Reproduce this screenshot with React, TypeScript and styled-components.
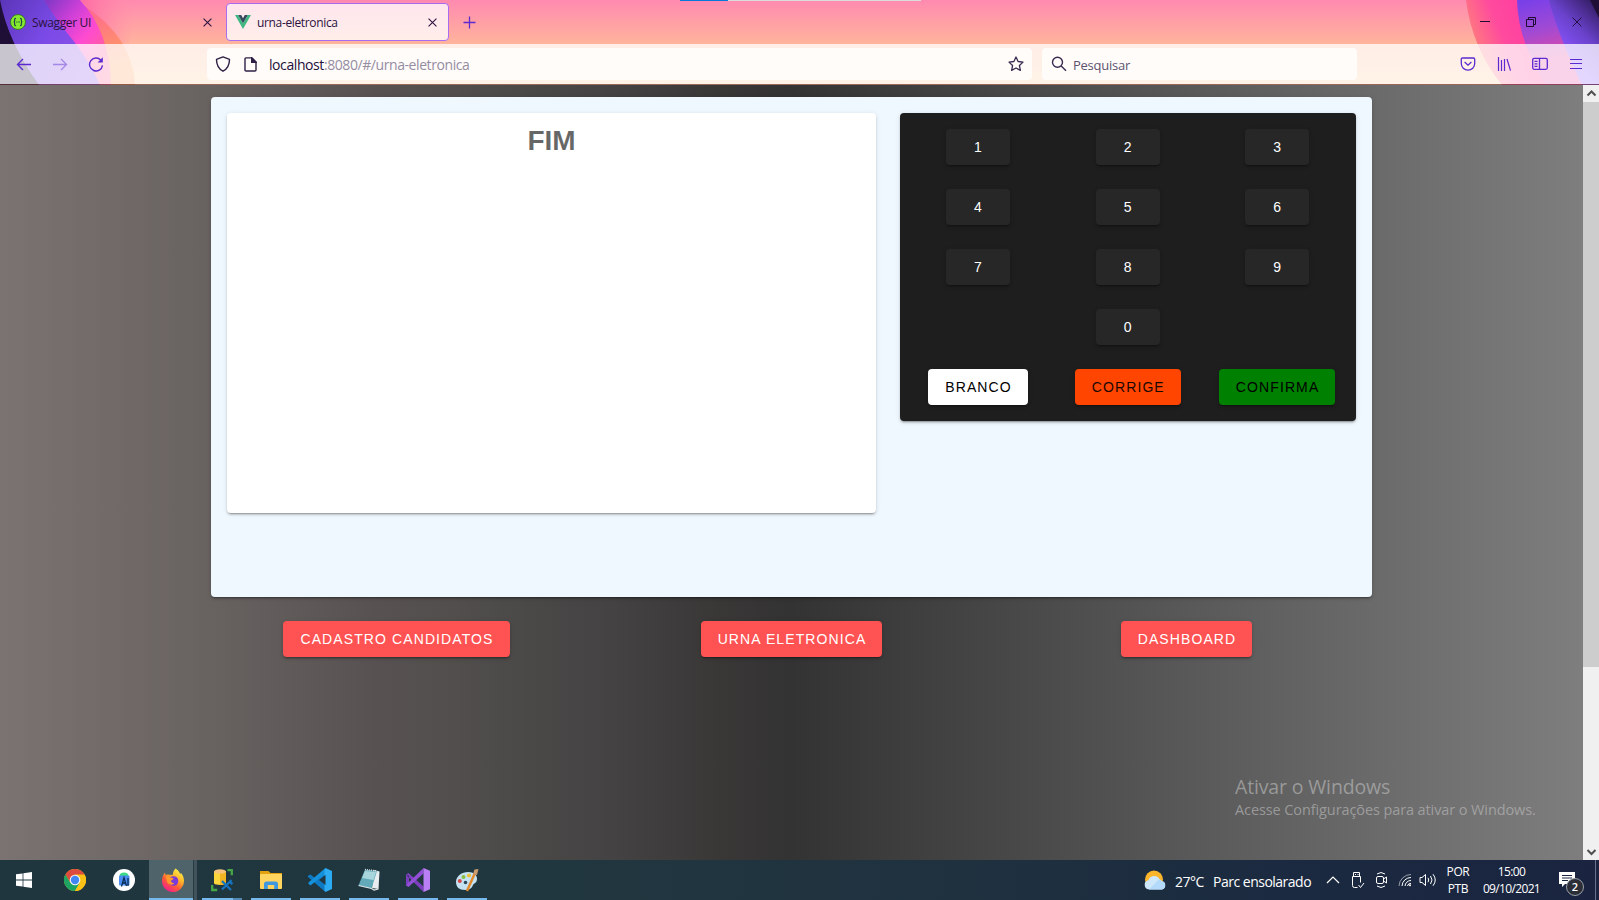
import React from 'react';
import styled, { createGlobalStyle } from 'styled-components';

const ui = '"Open Sans", "Noto Sans", sans-serif';
const sans = '"Liberation Sans", Arial, sans-serif';

const Global = createGlobalStyle`
  * { box-sizing: border-box; }
  body { margin: 0; overflow: hidden; }
  svg { display: block; flex: none; }
  button { border: 0; padding: 0; background: none; }
`;

const Desktop = styled.div`
  width: 1599px;
  height: 900px;
  display: flex;
  flex-direction: column;
  overflow: hidden;
`;

/* ---------- browser chrome ---------- */

const Chrome = styled.header`
  position: relative;
  isolation: isolate;
  height: 85px;
  flex: none;
  background: linear-gradient(#ff8ab0 0, #ffb49c 44px, #ffcf9a 85px);
`;

const ThemeLayer = styled.svg`
  position: absolute;
  inset: 0;
  z-index: -1;
`;

const LoadBar = styled.div`
  position: absolute;
  top: 0;
  left: 680px;
  width: 241px;
  height: 1px;
  background: linear-gradient(90deg, #0a78d7 48px, #dcdcdc 48px);
`;

const TabStrip = styled.div`
  height: 44px;
  display: flex;
  align-items: center;
`;

const Tab = styled.div<{ $active?: boolean }>`
  width: ${p => (p.$active ? 223 : 226)}px;
  height: 38px;
  display: flex;
  align-items: center;
  padding: ${p => (p.$active ? '0 11px 0 8px' : '0 14px 0 10px')};
  border-radius: 4px;
  border: ${p => (p.$active ? '1px solid #a86cf0' : '0')};
  background: ${p => (p.$active ? 'rgba(255,255,255,.78)' : 'none')};
`;

const TabTitle = styled.span<{ $spacing: number; $gap: number }>`
  flex: 1;
  margin-left: ${p => p.$gap}px;
  padding-top: 2px;
  font: 12px/16px ${ui};
  letter-spacing: ${p => p.$spacing}px;
  color: #2b1240;
  white-space: nowrap;
`;

const NewTab = styled.button`
  margin-left: 14px;
`;

const WindowButtons = styled.div`
  margin-left: auto;
  display: flex;
  gap: 36px;
  padding-right: 17px;
`;

const Toolbar = styled.div`
  height: 41px;
  display: flex;
  align-items: center;
  background: rgba(255, 255, 255, 0.76);
  border-bottom: 1px solid rgba(110, 60, 60, 0.7);
  background-clip: padding-box;
`;

const NavButtons = styled.div`
  width: 207px;
  display: flex;
  gap: 20px;
  padding-left: 16px;
`;

const Field = styled.div<{ $width: number }>`
  width: ${p => p.$width}px;
  height: 32px;
  display: flex;
  align-items: center;
  border-radius: 4px;
  background: #fffcfa;
  color: #5d5370;
  white-space: nowrap;
`;

const UrlField = styled(Field)`
  padding: 0 8px;
`;

const SearchField = styled(Field)`
  margin-left: 10px;
  padding-left: 9px;
`;

const Url = styled.span`
  flex: 1;
  margin-left: 12px;
  padding-top: 2px;
  font: 14px/20px ${ui};
  letter-spacing: -0.42px;
  color: #958da2;
`;

const Host = styled.span`
  color: #24103a;
`;

const SearchHint = styled.span`
  margin-left: 6px;
  padding-top: 2px;
  font: 13px/20px ${ui};
  letter-spacing: -0.25px;
`;

const DocIcon = styled.svg`
  margin-left: 13px;
`;

const ToolIcons = styled.div`
  margin-left: auto;
  display: flex;
  align-items: center;
  gap: 20px;
  padding-right: 15px;
`;

/* ---------- page ---------- */

const Viewport = styled.div`
  position: relative;
  height: 775px;
  flex: none;
  display: flex;
`;

const Page = styled.main`
  width: 1583px;
  padding: 12px 199px 0;
  background: linear-gradient(
    90deg,
    #7a7371 0%,
    #686261 13%,
    #575251 24%,
    #4e4c4a 31%,
    #454343 38%,
    #393636 46%,
    #333 50%,
    #7e7e7e 100%
  );
`;

const shadow =
  '0 3px 1px -2px rgba(0,0,0,.2), 0 2px 2px 0 rgba(0,0,0,.14), 0 1px 5px 0 rgba(0,0,0,.12)';

const Urna = styled.section`
  height: 500px;
  margin: 0 12px;
  padding: 16px;
  display: flex;
  align-items: flex-start;
  gap: 24px;
  border-radius: 4px;
  background: aliceblue;
  box-shadow: ${shadow};
`;

const Screen = styled.div`
  width: 649px;
  height: 400px;
  padding-top: 11px;
  border-radius: 4px;
  background: #fff;
  box-shadow: ${shadow};
  text-align: center;
`;

const ScreenTitle = styled.h1`
  margin: 0;
  font: bold 28px/34px ${sans};
  color: rgba(0, 0, 0, 0.6);
`;

const Keypad = styled.div`
  width: 456px;
  height: 308px;
  padding: 16px 4px;
  display: grid;
  grid-template-columns: 148px 151.6px 147px;
  grid-auto-rows: 36px;
  row-gap: 24px;
  justify-items: center;
  border-radius: 4px;
  background: #1e1e1e;
  box-shadow: ${shadow};
`;

const Button = styled.button<{ $bg?: string; $fg?: string; $column?: number }>`
  grid-column: ${p => p.$column ?? 'auto'};
  height: 36px;
  min-width: 64px;
  padding: 0 16px 0 17px;
  border-radius: 4px;
  background: ${p => p.$bg ?? '#272727'};
  color: ${p => p.$fg ?? '#fff'};
  font: 14px/36px ${sans};
  letter-spacing: 1.1px;
  white-space: nowrap;
  box-shadow: ${shadow};
`;

const Links = styled.nav`
  margin-top: 24px;
  display: grid;
  grid-template-columns: repeat(3, 1fr);
  justify-items: center;
`;

const Scrollbar = styled.div`
  width: 16px;
  display: flex;
  flex-direction: column;
  justify-content: space-between;
  background: #f0f0f0;
`;

const Thumb = styled.div`
  height: 565px;
  margin-bottom: auto;
  background: #cdcdcd;
`;

const Watermark = styled.div`
  position: absolute;
  left: 1235px;
  top: 690px;
  color: rgba(190, 190, 190, 0.62);
  white-space: nowrap;
`;

const WatermarkTitle = styled.div`
  font: 19.5px/24px ${ui};
  letter-spacing: -0.15px;
`;

const WatermarkText = styled.div`
  font: 14.5px/21px ${ui};
  letter-spacing: -0.1px;
`;

/* ---------- taskbar ---------- */

const Taskbar = styled.footer`
  height: 40px;
  flex: none;
  display: flex;
  background: linear-gradient(90deg, #20363f 0%, #21373f 35%, #1f313f 60%, #1b2a40 80%, #1a2440 100%);
`;

const StartButton = styled.div`
  width: 51px;
  display: flex;
  align-items: center;
  padding-left: 16px;
`;

const TaskItem = styled.div<{ $state?: 'open' | 'multi' | 'active' }>`
  width: 49px;
  display: flex;
  align-items: center;
  justify-content: center;
  padding-right: ${p => (p.$state === 'active' ? 2 : 1)}px;
  background: ${p => {
    if (p.$state === 'active')
      return `linear-gradient(#76b9ed, #76b9ed) 0 100% / 44px 2px no-repeat,
        linear-gradient(90deg, #4f636b 44px, #263a43 44px, #263a43 45px, #42525b 45px, #42525b 48px, transparent 48px)`;
    if (p.$state === 'multi')
      return `linear-gradient(90deg, #76b9ed 31px, #5388b2 31px) 4px 100% / 40px 2px no-repeat`;
    if (p.$state === 'open')
      return `linear-gradient(#76b9ed, #76b9ed) 4px 100% / 40px 2px no-repeat`;
    return 'none';
  }};
`;

const Tray = styled.div`
  margin-left: auto;
  display: flex;
  align-items: center;
  color: #fff;
  font: 12px/17px ${ui};
`;

const Weather = styled.div`
  width: 185px;
  display: flex;
  align-items: center;
  padding-left: 3px;
  white-space: nowrap;
  font-size: 14px;
`;

const Degrees = styled.span`
  width: 38px;
  margin-left: 9px;
  padding-top: 2px;
  letter-spacing: -0.5px;
`;

const Condition = styled.span`
  padding-top: 2px;
  letter-spacing: -0.5px;
`;

const TrayIcons = styled.div`
  width: 112px;
  display: flex;
  align-items: center;
`;

const UsbIcon = styled.svg`
  margin-left: 10px;
`;

const CameraIcon = styled.svg`
  margin-left: 10px;
`;

const WifiIcon = styled.svg`
  margin-left: 10px;
`;

const SpeakerIcon = styled.svg`
  margin-left: 7px;
`;

const TwoLine = styled.div<{ $width: number; $spacing: number }>`
  width: ${p => p.$width}px;
  height: 34px;
  display: flex;
  flex-direction: column;
  align-items: center;
  white-space: nowrap;
  font-size: 12px;
  letter-spacing: ${p => p.$spacing}px;
`;

const Notifications = styled.div`
  position: relative;
  width: 50px;
  height: 40px;
  padding: 12px 0 0 14px;
`;

const Badge = styled.span`
  position: absolute;
  left: 21px;
  top: 18px;
  width: 18px;
  height: 18px;
  border-radius: 50%;
  border: 1px solid #9aa0a8;
  background: #2b2e36;
  font: 600 11px/15px ${ui};
  text-align: center;
`;

const ShowDesktop = styled.div`
  width: 4px;
  height: 40px;
  border-left: 1px solid #69728a;
`;

const CloseX = ({ size = 9, color = '#2b1240', w = 1.2 }) => (
  <svg width={size} height={size} viewBox="0 0 10 10" stroke={color} strokeWidth={w}>
    <path d="M.6.6l8.8 8.8M9.4.6L.6 9.4" />
  </svg>
);

const Theme = () => (
  <ThemeLayer width="1599" height="85" viewBox="0 0 1599 85">
    <defs>
      <linearGradient id="lp" x1="0" y1="0" x2="1" y2="0.6">
        <stop offset="0" stopColor="#5a35b8" />
        <stop offset=".5" stopColor="#7a4ae6" />
        <stop offset="1" stopColor="#8f50e8" />
      </linearGradient>
      <linearGradient id="lm" x1="50" y1="0" x2="110" y2="50" gradientUnits="userSpaceOnUse">
        <stop offset="0" stopColor="#8838c8" />
        <stop offset=".35" stopColor="#d040d8" />
        <stop offset=".65" stopColor="#ff4bd0" />
        <stop offset="1" stopColor="#ff5f96" />
      </linearGradient>
      <linearGradient id="lo" x1="90" y1="0" x2="120" y2="70" gradientUnits="userSpaceOnUse">
        <stop offset="0" stopColor="#ff5f98" />
        <stop offset=".6" stopColor="#ff8a72" />
        <stop offset="1" stopColor="#ffa05a" />
      </linearGradient>
      <linearGradient id="lg" x1="85" y1="0" x2="135" y2="0" gradientUnits="userSpaceOnUse">
        <stop offset="0" stopColor="#ff6fa5" />
        <stop offset="1" stopColor="#ff8fa8" stopOpacity="0" />
      </linearGradient>
      <linearGradient id="ro" x1="1466" y1="30" x2="1515" y2="10" gradientUnits="userSpaceOnUse">
        <stop offset="0" stopColor="#ff7e7c" />
        <stop offset=".6" stopColor="#ff4a9e" />
        <stop offset="1" stopColor="#ff429f" />
      </linearGradient>
      <linearGradient id="rp" x1="1530" y1="0" x2="1545" y2="60" gradientUnits="userSpaceOnUse">
        <stop offset="0" stopColor="#7a40e8" />
        <stop offset=".5" stopColor="#a04ad4" />
        <stop offset="1" stopColor="#e04aa8" />
      </linearGradient>
      <linearGradient id="rv" x1="1560" y1="50" x2="1599" y2="10" gradientUnits="userSpaceOnUse">
        <stop offset="0" stopColor="#8a55ff" />
        <stop offset=".5" stopColor="#6a42cc" />
        <stop offset="1" stopColor="#38206c" />
      </linearGradient>
    </defs>
    <path d="M80 0H140L128 50Z" fill="url(#lg)" />
    <path d="M75 0Q133 34 135 85H60Z" fill="url(#lo)" />
    <path d="M40 0H80Q110 32 111 85H60Z" fill="url(#lm)" />
    <path d="M0 0H44Q56 20 76 44Q92 66 100 85H0Z" fill="url(#lp)" />
    <path d="M0 0Q8 42 39 85H0Z" fill="#1f0f36" />
    <path d="M1466 0Q1472 48 1502 85H1560L1530 0Z" fill="url(#ro)" />
    <path d="M1517 0Q1518 42 1546 85H1599V0Z" fill="url(#rp)" />
    <path d="M1549 0Q1556 30 1582 85H1599V0Z" fill="url(#rv)" />
    <path d="M1590 0L1599 18V0Z" fill="#1f0f36" />
  </ThemeLayer>
);

const Browser = () => (
  <Chrome>
    <Theme />
    <LoadBar />
    <TabStrip>
      <Tab>
        <svg width="16" height="16" viewBox="0 0 16 16">
          <circle cx="8" cy="8" r="7.5" fill="#85ea2d" stroke="#34702a" strokeWidth=".9" />
          <path
            d="M6 4.2c-1.6 0-1.3 1-1.3 2.2 0 .9-.4 1.5-1 1.6.6.1 1 .7 1 1.6 0 1.2-.3 2.2 1.3 2.2M10 4.2c1.6 0 1.3 1 1.3 2.2 0 .9.4 1.5 1 1.6-.6.1-1 .7-1 1.6 0 1.2.3 2.2-1.3 2.2M6.3 8h.8M7.7 8h.8M9.1 8h.8"
            fill="none"
            stroke="#173647"
            strokeWidth="1.1"
          />
        </svg>
        <TabTitle $gap={6} $spacing={-0.35}>Swagger UI</TabTitle>
        <CloseX />
      </Tab>
      <Tab $active>
        <svg width="16" height="14" viewBox="0 0 16 14">
          <path d="M0 0h3.200L8 8.200 12.800 0H16L8 13.900z" fill="#41b883" />
          <path d="M3.200 0h3L8 3.200 9.800 0h3L8 8.300z" fill="#35495e" />
        </svg>
        <TabTitle $gap={6} $spacing={-0.35}>urna-eletronica</TabTitle>
        <CloseX />
      </Tab>
      <NewTab>
        <svg width="13" height="13" viewBox="0 0 13 13" stroke="#5b2ad0" strokeWidth="1.3">
          <path d="M6.5 .5v12M.5 6.5h12" />
        </svg>
      </NewTab>
      <WindowButtons>
        <svg width="10" height="10" viewBox="0 0 10 10">
          <path d="M0 4.500h10" stroke="#1d0c30" />
        </svg>
        <svg width="10" height="10" viewBox="0 0 10 10" fill="none" stroke="#1d0c30">
          <path d="M.5 2.500h7v7h-7zM2.500 2.500v-2h7v7h-2" />
        </svg>
        <CloseX size={10} color="#1d0c30" w={0.9} />
      </WindowButtons>
    </TabStrip>
    <Toolbar>
      <NavButtons>
        <svg width="16" height="16" viewBox="0 0 16 16" fill="none" stroke="#5b2ad0" strokeWidth="1.4">
          <path d="M15 8.500H1.500M7 3L1.500 8.500 7 14" />
        </svg>
        <svg width="16" height="16" viewBox="0 0 16 16" fill="none" stroke="#5b2ad0" strokeOpacity=".45" strokeWidth="1.3">
          <path d="M1 8.500h13.500M9 3L14.500 8.500 9 14" />
        </svg>
        <svg width="16" height="16" viewBox="0 0 16 16" fill="none" stroke="#5b2ad0" strokeWidth="1.4">
          <path d="M12.800 4A6.500 6.500 0 1 0 14.500 9.400" />
          <path d="M14.800 1.300v5.200H9.600z" fill="#5b2ad0" stroke="none" />
        </svg>
      </NavButtons>
      <UrlField $width={825}>
        <svg width="16" height="16" viewBox="0 0 16 16" fill="none" stroke="#2f2145" strokeWidth="1.4">
          <path d="M8 .9L14.500 3.400C14.500 9 12.600 12.600 8 15.200 3.400 12.600 1.500 9 1.500 3.400Z" strokeLinejoin="round" />
        </svg>
        <DocIcon width="13" height="15" viewBox="0 0 13 15" fill="none" stroke="#2f2145" strokeWidth="1.4">
          <path d="M2 .9H8L12 5V13q0 1-1 1H2Q1 14 1 13V2Q1 .9 2 .9Z" />
          <path d="M7.700 1V5.300H12z" fill="#2f2145" />
        </DocIcon>
        <Url>
          <Host>localhost</Host>:8080/#/urna-eletronica
        </Url>
        <svg width="16" height="16" viewBox="0 0 16 16" fill="none" stroke="#38294f" strokeWidth="1.3">
          <path d="M8 1l2.100 4.500 4.900.6-3.600 3.400 1 4.900L8 12l-4.400 2.400 1-4.900L1 6.100l4.900-.6z" strokeLinejoin="round" />
        </svg>
      </UrlField>
      <SearchField $width={315}>
        <svg width="16" height="16" viewBox="0 0 16 16" fill="none" stroke="#38294f" strokeWidth="1.4">
          <circle cx="6.500" cy="6.200" r="5" />
          <path d="M10.200 10L15 14.700" />
        </svg>
        <SearchHint>Pesquisar</SearchHint>
      </SearchField>
      <ToolIcons>
        <svg width="16" height="16" viewBox="0 0 16 16" fill="none" stroke="#5b2ad0" strokeWidth="1.3">
          <path d="M2.500 2h11q1.200 0 1.200 1.200V7.500a6.700 6.700 0 0 1-13.400 0V3.200Q1.300 2 2.500 2zM4.600 6L8 9.200 11.400 6" />
        </svg>
        <svg width="16" height="16" viewBox="0 0 16 16" fill="none" stroke="#5b2ad0" strokeWidth="1.2">
          <path d="M2.500 1v14M5.500 4v11M8.500 3v12M11 3l3.500 11.700" />
        </svg>
        <svg width="16" height="16" viewBox="0 0 16 16" fill="none" stroke="#5b2ad0" strokeWidth="1.3">
          <rect x=".7" y="2.3" width="14.6" height="11" rx="1.5" />
          <path d="M7.500 2.500v11M2.500 5.300h3M2.500 7.800h3M2.500 10.300h3" />
        </svg>
        <svg width="16" height="16" viewBox="0 0 16 16" stroke="#5b2ad0" strokeWidth="1.1">
          <path d="M2 3.500h12M2 7.500h12M2 12.500h12" />
        </svg>
      </ToolIcons>
    </Toolbar>
  </Chrome>
);

const AppPage = () => (
  <Viewport>
    <Page>
      <Urna>
        <Screen>
          <ScreenTitle>FIM</ScreenTitle>
        </Screen>
        <Keypad>
          {[1, 2, 3, 4, 5, 6, 7, 8, 9].map(n => (
            <Button key={n}>{n}</Button>
          ))}
          <Button $column={2}>0</Button>
          <Button $column={1} $bg="#fff" $fg="#000">BRANCO</Button>
          <Button $column={2} $bg="orangered" $fg="#1a0800">CORRIGE</Button>
          <Button $column={3} $bg="green" $fg="#000">CONFIRMA</Button>
        </Keypad>
      </Urna>
      <Links>
        {['CADASTRO CANDIDATOS', 'URNA ELETRONICA', 'DASHBOARD'].map(t => (
          <Button key={t} $bg="#ff5252">{t}</Button>
        ))}
      </Links>
    </Page>
    <Scrollbar>
      <svg width="16" height="17" viewBox="0 0 16 17" fill="none" stroke="#505050" strokeWidth="2">
        <path d="M4.500 10.500L8.500 6.500 12.500 10.500" />
      </svg>
      <Thumb />
      <svg width="16" height="17" viewBox="0 0 16 17" fill="none" stroke="#505050" strokeWidth="2">
        <path d="M4.500 7L8.500 11 12.500 7" />
      </svg>
    </Scrollbar>
    <Watermark>
      <WatermarkTitle>Ativar o Windows</WatermarkTitle>
      <WatermarkText>Acesse Configurações para ativar o Windows.</WatermarkText>
    </Watermark>
  </Viewport>
);

const WindowsBar = () => (
  <Taskbar>
    <StartButton>
      <svg width="16" height="16" viewBox="0 0 16 16" fill="#fff">
        <path d="M0 2.300L6.600 1.400V7.600H0zM7.400 1.200L16 0V7.600H7.400zM0 8.400H6.600V14.600L0 13.700zM7.400 8.400H16V16L7.400 14.800z" />
      </svg>
    </StartButton>
    <TaskItem>
      <svg width="22" height="22" viewBox="0 0 22 22">
        <circle cx="11" cy="11" r="11" fill="#fbc116" />
        <path d="M1.470 5.500A11 11 0 0 1 20.530 5.500H11L6.240 13.750Z" fill="#dd4b3e" />
        <path d="M1.470 5.500A11 11 0 0 0 11 22L15.760 13.750H6.240Z" fill="#1da462" />
        <path d="M20.530 5.500A11 11 0 0 1 11 22L15.760 13.750 15 8Z" fill="#fbc116" />
        <circle cx="11" cy="11" r="5.3" fill="#f4f6f8" />
        <circle cx="11" cy="11" r="4.2" fill="#4285f4" />
      </svg>
    </TaskItem>
    <TaskItem>
      <svg width="22" height="22" viewBox="0 0 22 22">
        <circle cx="11" cy="11" r="11" fill="#fff" />
        <path d="M6.500 7a4.500 3.600 0 0 1 9 0z" fill="#3ddc84" />
        <rect x="6" y="6.500" width="10.500" height="10" rx="1" fill="#4a8df0" />
        <path d="M8.500 17.500L11 8.700 13.500 17M9.300 14h3.500M15 9v8" fill="none" stroke="#0b2d55" strokeWidth="1.3" />
      </svg>
    </TaskItem>
    <TaskItem $state="active">
      <svg width="24" height="24" viewBox="0 0 24 24">
        <defs>
          <linearGradient id="ff" x1="19" y1="2" x2="5" y2="22" gradientUnits="userSpaceOnUse">
            <stop offset="0" stopColor="#fff14a" />
            <stop offset=".35" stopColor="#ffb32a" />
            <stop offset=".65" stopColor="#ff5b36" />
            <stop offset="1" stopColor="#f0218c" />
          </linearGradient>
        </defs>
        <path
          d="M14.500 .5c2.500 1.500 4 3.500 4.600 5.500.5-.2.700-.8.700-1.300 2.300 2.600 3.200 5.500 3.200 8.300a11 11 0 0 1-22 .3C1 9.500 2 6.500 4 4.500c0 1.200.4 2 .9 2.500 1.300-.6 2.700-.6 4 0 1.500-.3 2.300-.4 3-.2C11.900 4.400 12.600 2.300 14.500.5z"
          fill="url(#ff)"
        />
        <circle cx="12.5" cy="13" r="4.8" fill="#7a3bd8" />
        <path d="M5 8.500c2.500-.5 4 .2 5 1.300 1.300 0 2.500.2 2.500.7 0 1-2 1.500-2.500 2.300 0 1.500 1.500 2.700 3.500 2-1.500 2.700-5.500 2.500-7.500-.8z" fill="#ff9a2b" />
      </svg>
    </TaskItem>
    <TaskItem $state="multi">
      <svg width="24" height="24" viewBox="0 0 24 24">
        <path d="M4 3.500v11.500c0 2.500 12 2.500 12 0V3.500z" fill="#fcd43c" />
        <path d="M10 3.500h6v11.500c0 1.200-3 1.900-6 1.900z" fill="#f2b522" />
        <ellipse cx="10" cy="3.4" rx="6" ry="2.1" fill="#f7c27c" />
        <path d="M17.500 2.200h4.300v5M2.200 17v5h5" fill="none" stroke="#46a546" strokeWidth="2.3" />
        <path d="M12 13l9 9M21.500 12l-9.500 9.500M19 13.500l3.500 2.500" stroke="#1673c0" strokeWidth="2.2" />
      </svg>
    </TaskItem>
    <TaskItem $state="open">
      <svg width="24" height="20" viewBox="0 0 24 20">
        <path d="M1 1h8.500l2 2H23v4H1z" fill="#e2a10e" />
        <rect x="1" y="4" width="22" height="15" rx="1" fill="#ffd560" />
        <path d="M5 19v-5q0-2.500 2.500-2.500h9q2.500 0 2.500 2.500v5h-3.800v-4H8.800v4z" fill="#3e97df" />
      </svg>
    </TaskItem>
    <TaskItem $state="open">
      <svg width="24" height="24" viewBox="0 0 24 24">
        <path d="M17.500 0L7.300 10.200 2.400 6.400 0 7.700v1.200L17.500 24z" fill="#0e7ac4" />
        <path d="M0 15.200l2.400 2.300L17.800 5.500 17.500 0 1 14z" fill="#1590da" />
        <path d="M17.500 0L24 3v18l-6.500 3-1-1.500V2z" fill="#2cabf2" />
        <path d="M17.500 7v10L11 12z" fill="#21363f" />
      </svg>
    </TaskItem>
    <TaskItem $state="open">
      <svg width="24" height="24" viewBox="0 0 24 24">
        <path d="M17 2L22.500 3.500 21.500 21 15 20z" fill="#e9edef" />
        <path d="M8 1.500L20 3 14.500 20.500 1.500 17.500z" fill="#62a9b9" />
        <path d="M8 3L19 4 16.500 12 5 10z" fill="#a9d6dd" />
        <path d="M8 1.500L20 3" stroke="#ddd" strokeWidth="1.5" strokeDasharray="1 1" />
        <path d="M1.500 17.500l13 3 2.500 1.500 4.500-1" fill="none" stroke="#dfe6e8" strokeWidth="1.2" />
      </svg>
    </TaskItem>
    <TaskItem $state="open">
      <svg width="24" height="24" viewBox="0 0 24 24">
        <path d="M0 6.500L2.500 5 17.500 18.500V24z M0 6.500V17.500L3 16V8z" fill="#7c3fc0" />
        <path d="M0 17.500L2.500 19 17.500 5.500V0L3 14z" fill="#9250d6" />
        <path d="M17.500 0L24 2.800V21.200L17.500 24z" fill="#b980f5" />
      </svg>
    </TaskItem>
    <TaskItem $state="open">
      <svg width="24" height="24" viewBox="0 0 24 24">
        <path d="M1 14C1 8 7 4 13 4s9 3 9 7-3 4-4 6-2 5-8 5S1 19 1 14z" fill="#c5e2f2" />
        <circle cx="4.8" cy="13" r="2" fill="#d94848" />
        <circle cx="8.5" cy="9" r="2" fill="#8bbd43" />
        <circle cx="14" cy="7.5" r="2.1" fill="#eec13c" />
        <circle cx="10.5" cy="14.5" r="1.8" fill="#2c4c5c" />
        <path d="M12 23L19.500 6" stroke="#e28a2c" strokeWidth="2.4" />
        <path d="M18 6l1.500-4.500L23.500 1 22 7z" fill="#c89b6c" />
      </svg>
    </TaskItem>
    <Tray>
      <Weather>
        <svg width="22" height="20" viewBox="0 0 22 20">
          <circle cx="10" cy="9.5" r="9" fill="#fbb52b" />
          <path d="M5 19.500a4.700 4.700 0 0 1-.5-9.300 6 6 0 0 1 11-1 3.800 3.800 0 0 1 2.300 1.900 4.300 4.300 0 0 1 .2 8.400z" fill="#cfe7fb" />
          <path d="M5 19.500L15 9.200a4 4 0 0 1 2.800 2 4.300 4.300 0 0 1 .2 8.300z" fill="#b3dafa" />
        </svg>
        <Degrees>27°C</Degrees>
        <Condition>Parc ensolarado</Condition>
      </Weather>
      <TrayIcons>
        <svg width="14" height="8" viewBox="0 0 14 8" fill="none" stroke="#fff" strokeWidth="1.2">
          <path d="M1 7l6-6 6 6" />
        </svg>
        <UsbIcon width="15" height="18" viewBox="0 0 15 18" fill="none" stroke="#fff">
          <path d="M3.500 5.500v-4h6v4M2.500 5.500h8v6M2.500 5.500V14.500q0 2 2 2h3M8.500 14l2 2.500L14 12M5 3.500h1M7.500 3.500h1" />
        </UsbIcon>
        <CameraIcon width="13" height="18" viewBox="0 0 13 18" fill="none" stroke="#fff">
          <rect x="1.5" y="5.5" width="7" height="7" rx="1.5" />
          <path d="M8.500 8l3-2v6l-3-2M2 3q4-3 8 0M2 15q4 3 8 0" />
        </CameraIcon>
        <WifiIcon width="14" height="14" viewBox="0 0 14 14" fill="none" stroke="#fff">
          <path d="M1 13A12 12 0 0 1 13 1.500" strokeOpacity=".55" />
          <path d="M4 13A9 9 0 0 1 13 4.500M7 13A6 6 0 0 1 13 7.500M9.500 13A3.500 3.500 0 0 1 13 10.300" />
          <circle cx="12" cy="12.3" r="1" fill="#fff" stroke="none" />
        </WifiIcon>
        <SpeakerIcon width="18" height="14" viewBox="0 0 18 14" fill="none" stroke="#fff">
          <path d="M1 4.500h2l3.500-3v11L3 9.500H1zM9 4.800q1.500 2.200 0 4.400M11.500 3q3 4 0 8M14 1.200q4.500 5.800 0 11.600" />
        </SpeakerIcon>
      </TrayIcons>
      <TwoLine $width={40} $spacing={-0.4}>
        <span>POR</span>
        <span>PTB</span>
      </TwoLine>
      <TwoLine $width={67} $spacing={-0.65}>
        <span>15:00</span>
        <span>09/10/2021</span>
      </TwoLine>
      <Notifications>
        <svg width="16" height="16" viewBox="0 0 16 16">
          <path d="M0 0h16v12H6l-3 3v-3H0z" fill="#fff" />
          <path d="M3 3.500h10M3 6h10M3 8.500h6" stroke="#1a2440" />
        </svg>
        <Badge>2</Badge>
      </Notifications>
      <ShowDesktop />
    </Tray>
  </Taskbar>
);

export default function App() {
  return (
    <Desktop>
      <Global />
      <Browser />
      <AppPage />
      <WindowsBar />
    </Desktop>
  );
}
